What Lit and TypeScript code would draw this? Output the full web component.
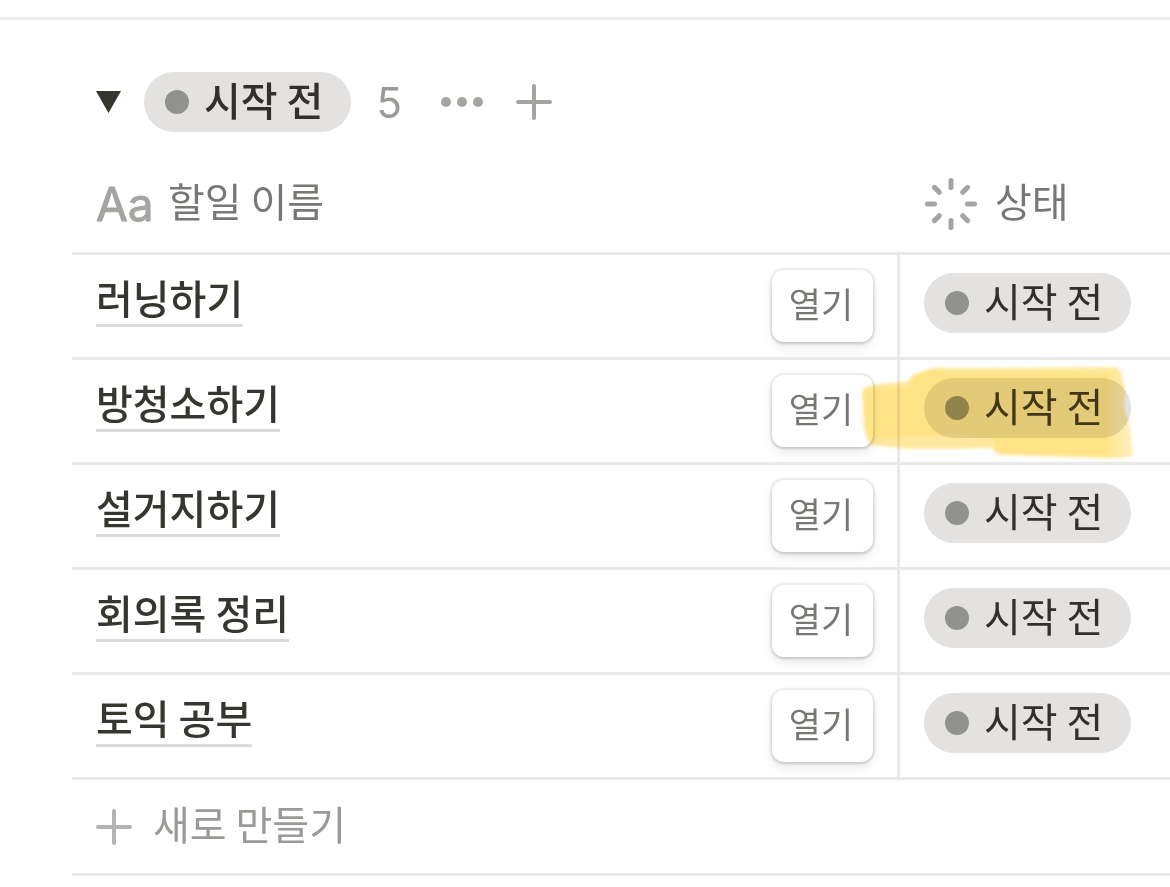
import { LitElement, html, css, svg } from "lit";
import { customElement, property } from "lit/decorators.js";

interface Task {
  name: string;
  marked?: boolean;
}

const TASKS: Task[] = [
  { name: "러닝하기" },
  { name: "방청소하기", marked: true },
  { name: "설거지하기" },
  { name: "회의록 정리" },
  { name: "토익 공부" },
];

const plusIcon = html`
  <svg width="36" height="36" viewBox="0 0 36 36" fill="none" stroke="currentColor"
    stroke-width="4" stroke-linecap="round" aria-hidden="true">
    <path d="M18 2V34M2 18H34" />
  </svg>
`;

@customElement("status-pill")
export class StatusPill extends LitElement {
  @property() label = "";

  static styles = css`
    :host {
      display: inline-flex;
      align-items: center;
      box-sizing: border-box;
      height: 60px;
      padding: 0 28px 0 21px;
      gap: 15px;
      border-radius: 30px;
      background: #e3e2e0;
      color: #32302c;
      font-size: 40px;
      line-height: 60px;
      white-space: nowrap;
    }
    .dot {
      width: 24px;
      height: 24px;
      border-radius: 50%;
      background: #91918e;
    }
    .label {
      padding-bottom: 6px;
    }
  `;

  render() {
    return html`<span class="dot"></span><span class="label">${this.label}</span>`;
  }
}

@customElement("app-root")
export class AppRoot extends LitElement {
  static styles = css`
    :host {
      display: block;
      background: #fff;
      color: #37352f;
      font-family: "Noto Sans CJK KR", sans-serif;
      font-size: 40px;
      overflow-x: hidden;
    }
    svg {
      display: block;
    }
    button {
      margin: 0;
      padding: 0;
      border: 0;
      background: none;
      font: inherit;
      color: inherit;
      cursor: pointer;
    }
    .board {
      margin-top: 17px;
      border-top: 3px solid #ededec;
      padding: 52px 0 0 72px;
    }
    .group {
      display: flex;
      align-items: center;
      height: 60px;
      padding-left: 24px;
      color: #a5a4a1;
    }
    .group-status {
      font-weight: 500;
    }
    .toggle {
      color: #37352f;
      margin-right: 22px;
    }
    .count {
      margin: 0 40px 0 25px;
      font-family: Inter, sans-serif;
      font-size: 42px;
      line-height: 60px;
      padding-top: 2px;
      color: #9b9a97;
      width: 24px;
    }
    .more {
      margin-right: 32px;
    }
    table {
      width: 100%;
      table-layout: fixed;
      border-collapse: separate;
      border-spacing: 0;
    }
    .status-col {
      width: 270px;
    }
    th,
    td {
      padding: 0;
      text-align: left;
      vertical-align: top;
      font-weight: 400;
      border-bottom: 3px solid #e9e9e7;
    }
    .head {
      display: flex;
      align-items: center;
      height: 96px;
      padding: 24px 0 0 24px;
      box-sizing: content-box;
      color: #787774;
      line-height: 96px;
    }
    .head-label {
      padding-bottom: 8px;
    }
    .aa {
      width: 56px;
      margin-right: 16px;
      font-family: Inter, sans-serif;
      font-size: 46px;
      -webkit-text-stroke: 1px currentColor;
      color: #a5a4a1;
    }
    .spinner {
      margin-right: 17px;
      color: #a5a4a1;
    }
    .name {
      border-right: 3px solid #e9e9e7;
    }
    .name-body {
      display: flex;
      justify-content: space-between;
      align-items: flex-start;
      height: 102px;
      padding: 0 24px;
      box-sizing: border-box;
    }
    .task {
      margin-top: 21px;
      padding-bottom: 6px;
      border-bottom: 3px solid #dddcda;
      color: inherit;
      text-decoration: none;
      font-weight: 500;
      line-height: 42px;
      white-space: nowrap;
    }
    .open {
      margin-top: 15px;
      width: 101px;
      height: 72px;
      padding: 0 3px 6px 0;
      border-radius: 12px;
      background: #fff;
      box-shadow: 0 0 2px 2px rgba(15, 15, 15, 0.08), 0 2px 3px rgba(15, 15, 15, 0.1),
        0 6px 12px rgba(15, 15, 15, 0.08);
      color: #787774;
      font-size: 35px;
      line-height: 64px;
    }
    .status {
      position: relative;
    }
    .status-body {
      display: flex;
      padding: 18px 0 0 24px;
    }
    .marked {
      color: #423c31;
    }
    .marker {
      position: absolute;
      left: -51px;
      top: -4px;
      mix-blend-mode: multiply;
      pointer-events: none;
    }
    .new {
      display: flex;
      align-items: center;
      width: 100%;
      height: 93px;
      padding-left: 24px;
      gap: 21px;
      color: #b4b3b1;
      line-height: 87px;
    }
    .new-label {
      color: #9b9a97;
      padding-bottom: 6px;
    }
  `;

  private marker() {
    return html`
      <svg class="marker" width="300" height="110" viewBox="0 0 300 110" aria-hidden="true">
        <defs>
          <filter id="soft" x="-10%" y="-10%" width="120%" height="120%">
            <feGaussianBlur stdDeviation="1.8" />
          </filter>
          <linearGradient id="fade" gradientUnits="userSpaceOnUse" x1="0" y1="0" x2="300" y2="0">
            <stop offset="0.86" stop-color="#ffe487" />
            <stop offset="0.93" stop-color="#fff0bd" />
          </linearGradient>
        </defs>
        <g filter="url(#soft)">
          <path fill="#ffe9a0"
            d="M13 36Q14 31 22 29L60 25Q62 17 72 16Q84 10 98 12L266 11Q272 13 273 20L276 36Q273 52 279 64L284 100Q270 103 250 102L152 99Q146 98 143 92L100 93L60 93L22 89Q17 86 15 70Z" />
          <path fill="url(#fade)"
            d="M14 38Q15 33 24 32L60 30Q62 19 72 17Q84 11 98 16L262 16Q268 18 270 30L273 38Q268 54 277 68L282 98Q260 101 250 100L152 98Q146 95 144 83Q100 77 60 81L22 85Q17 80 15 66Z" />
        </g>
      </svg>
    `;
  }

  private row(task: Task) {
    return html`
      <tr>
        <td class="name">
          <div class="name-body">
            <a class="task" href="#">${task.name}</a>
            <button class="open" type="button">열기</button>
          </div>
        </td>
        <td class="status">
          <div class="status-body">
            <status-pill class=${task.marked ? "marked" : ""} label="시작 전"></status-pill>
          </div>
          ${task.marked ? this.marker() : null}
        </td>
      </tr>
    `;
  }

  render() {
    return html`
      <main class="board">
        <div class="group">
          <button class="toggle" type="button" aria-label="그룹 접기">
            <svg width="26" height="22" viewBox="0 0 26 22" aria-hidden="true">
              <path d="M0 0H25L12.5 22Z" fill="currentColor" />
            </svg>
          </button>
          <status-pill class="group-status" label="시작 전"></status-pill>
          <span class="count">${TASKS.length}</span>
          <button class="more" type="button" aria-label="더 보기">
            <svg width="44" height="12" viewBox="0 0 44 12" fill="currentColor" aria-hidden="true">
              <circle cx="6" cy="6" r="5" /><circle cx="22" cy="6" r="5" /><circle cx="38" cy="6" r="5" />
            </svg>
          </button>
          <button type="button" aria-label="추가">${plusIcon}</button>
        </div>
        <table>
          <colgroup>
            <col />
            <col class="status-col" />
          </colgroup>
          <thead>
            <tr>
              <th>
                <div class="head">
                  <span class="aa" aria-hidden="true">Aa</span><span class="head-label">할일 이름</span>
                </div>
              </th>
              <th>
                <div class="head">
                  <svg class="spinner" width="54" height="54" viewBox="0 0 54 54" fill="none"
                    stroke="currentColor" stroke-width="5" stroke-linecap="round" aria-hidden="true">
                    ${[0, 45, 90, 135, 180, 225, 270, 315].map(
                      (a) => svg`<path d="M27 3.5V10.5" transform="rotate(${a} 27 27)" />`,
                    )}
                  </svg>
                  <span class="head-label">상태</span>
                </div>
              </th>
            </tr>
          </thead>
          <tbody>
            ${TASKS.map((task) => this.row(task))}
            <tr>
              <td colspan="2">
                <button class="new" type="button">
                  ${plusIcon}<span class="new-label">새로 만들기</span>
                </button>
              </td>
            </tr>
          </tbody>
        </table>
      </main>
    `;
  }
}
